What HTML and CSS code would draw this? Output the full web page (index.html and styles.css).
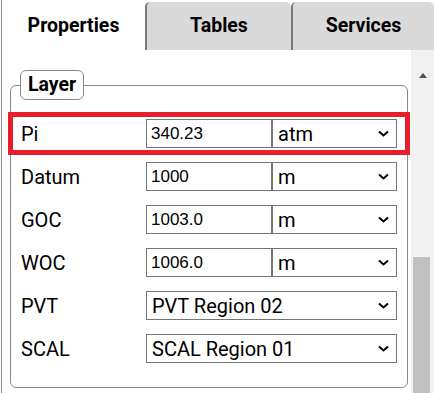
FILE: index.html
```html
<!DOCTYPE html>
<html lang="en">
<head>
    <meta charset="UTF-8">
    <meta name="viewport" content="width=device-width, initial-scale=1.0">
    <title>Properties</title>
    <link rel="stylesheet" href="styles.css">
</head>
<body>
    <div class="app">
        <div class="tabs">
            <div class="tab active">Properties</div>
            <div class="tab">Tables</div>
            <div class="tab">Services</div>
        </div>

        <div class="panel">
            <div class="content">
                <fieldset class="group">
                    <legend>Layer</legend>

                    <!-- highlighted row -->
                    <div class="row highlight">
                        <label>Pi</label>
                        <input type="text" value="340.23">
                        <select><option>atm</option></select>
                    </div>
                    <div class="row">
                        <label>Datum</label>
                        <input type="text" value="1000">
                        <select><option>m</option></select>
                    </div>
                    <div class="row">
                        <label>GOC</label>
                        <input type="text" value="1003.0">
                        <select><option>m</option></select>
                    </div>
                    <div class="row">
                        <label>WOC</label>
                        <input type="text" value="1006.0">
                        <select><option>m</option></select>
                    </div>
                    <div class="row">
                        <label>PVT</label>
                        <select class="wide"><option>PVT Region 02</option></select>
                    </div>
                    <div class="row">
                        <label>SCAL</label>
                        <select class="wide"><option>SCAL Region 01</option></select>
                    </div>
                </fieldset>
            </div>

            <div class="scrollbar">
                <span class="arrow-up"></span>
                <div class="thumb"></div>
            </div>
        </div>
    </div>
</body>
</html>
```

FILE: styles.css
```css
* {
    box-sizing: border-box;
}
html, body {
    margin: 0;
    height: 100%;
    overflow: hidden;
}
body {
    font-family: Roboto, "Liberation Sans", sans-serif;
    color: #000;
    background: #fff;
}
.app {
    height: 100vh;
    margin-left: 1px;
    border-left: 1px solid #8c8c8c;
    display: flex;
    flex-direction: column;
}
.tabs {
    display: flex;
    height: 50px;
    padding-top: 2px;
    flex: none;
}
.tab {
    display: flex;
    align-items: center;
    justify-content: center;
    font-size: 19.5px;
    font-weight: 700;
    background: #dadada;
    border-left: 2px solid #7a7a7a;
    border-radius: 5px 5px 0 0;
    padding-bottom: 2px;
}
.tab:nth-child(1) {
    width: 143px;
}
.tab:nth-child(2) {
    width: 146px;
}
.tab:nth-child(3) {
    flex: 1;
}
.tab.active {
    background: #fff;
    border-left: none;
}
.panel {
    flex: 1;
    display: flex;
    min-height: 0;
}
.content {
    flex: 1;
    padding: 0 3px 0 8px;
}
.group {
    margin: 20px 0 0 0;
    padding: 12px 0 17px 0;
    border: 1px solid #8a8a8a;
    border-radius: 6px;
    min-width: 0;
}
.group legend {
    margin-left: 9px;
    height: 30px;
    padding: 0 7px;
    border: 1px solid #8a8a8a;
    border-radius: 6px;
    font-size: 19.5px;
    font-weight: 700;
    line-height: 27px;
}
.row {
    display: flex;
    align-items: center;
    height: 43px;
    margin: 0 -3px;
    padding-left: 13px;
}
.row.highlight {
    outline: 5px solid #e5202a;
    outline-offset: -5px;
}
.row label {
    width: 125px;
    font-size: 20px;
}
.row input {
    width: 126px;
    height: 29px;
    margin: 0;
    padding: 0 4px;
    border: 1px solid #767676;
    border-radius: 0;
    font-family: "Liberation Sans", Arial, sans-serif;
    font-size: 17px;
    color: #000;
}
.row select {
    appearance: none;
    width: 125px;
    height: 29px;
    margin: 0;
    padding: 0 5px;
    border: 1px solid #767676;
    border-radius: 0;
    background: #fff url("data:image/svg+xml;utf8,<svg xmlns='http://www.w3.org/2000/svg' width='11' height='7' viewBox='0 0 11 7'><path d='M1 1.5 L5.5 5.5 L10 1.5' fill='none' stroke='black' stroke-width='2'/></svg>") no-repeat right 7px center;
    font-family: Roboto, sans-serif;
    font-size: 20px;
    color: #000;
}
.row select.wide {
    width: 251px;
}
.scrollbar {
    width: 23px;
    flex: none;
    background: #f1f1f1;
    display: flex;
    flex-direction: column;
    align-items: center;
}
.arrow-up {
    margin-top: 23px;
    width: 0;
    height: 0;
    border-left: 4px solid transparent;
    border-right: 4px solid transparent;
    border-bottom: 5px solid #505050;
}
.thumb {
    margin-top: auto;
    align-self: flex-start;
    margin-left: 2px;
    width: 17px;
    height: 136px;
    background: #c1c1c1;
}
```
